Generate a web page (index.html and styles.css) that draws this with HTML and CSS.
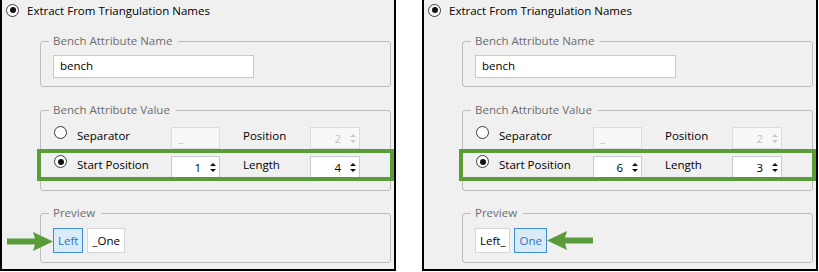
FILE: index.html
```html
<!DOCTYPE html>
<html lang="en">
<head>
    <meta charset="UTF-8">
    <title>Bench Attribute Extraction</title>
    <link rel="stylesheet" href="styles.css">
</head>
<body>

    <div class="shots">

        <!-- Before: start position 1, length 4 -->
        <div class="panel">
            <div class="top-opt"><span class="radio on"></span>Extract From Triangulation Names</div>

            <fieldset class="group name-group">
                <legend>Bench Attribute Name</legend>
                <div class="textbox wide">bench</div>
            </fieldset>

            <fieldset class="group value-group">
                <legend>Bench Attribute Value</legend>
                <div class="row">
                    <span class="radio"></span>
                    <span class="lbl">Separator</span>
                    <div class="textbox small disabled">_</div>
                    <span class="lbl2">Position</span>
                    <div class="spin disabled"><span class="val">2</span><span class="arrows"><i class="up"></i><i class="down"></i></span></div>
                </div>
                <div class="row marked">
                    <span class="radio on"></span>
                    <span class="lbl">Start Position</span>
                    <div class="spin small"><span class="val">1</span><span class="arrows"><i class="up"></i><i class="down"></i></span></div>
                    <span class="lbl2">Length</span>
                    <div class="spin"><span class="val">4</span><span class="arrows"><i class="up"></i><i class="down"></i></span></div>
                    <div class="mark"></div>
                </div>
            </fieldset>

            <fieldset class="group preview-group">
                <legend>Preview</legend>
                <div class="chips">
                    <svg class="arrow arrow-in" width="46" height="21" viewBox="0 0 46 21">
                        <polygon points="0,7.5 28,7.5 26,1 46,10.5 26,20 28,13.5 0,13.5" fill="#5a9c3a"/>
                    </svg>
                    <span class="chip active">Left</span>
                    <span class="chip">_One</span>
                </div>
            </fieldset>
        </div>

        <!-- After: start position 6, length 3 -->
        <div class="panel">
            <div class="top-opt"><span class="radio on"></span>Extract From Triangulation Names</div>

            <fieldset class="group name-group">
                <legend>Bench Attribute Name</legend>
                <div class="textbox wide">bench</div>
            </fieldset>

            <fieldset class="group value-group">
                <legend>Bench Attribute Value</legend>
                <div class="row">
                    <span class="radio"></span>
                    <span class="lbl">Separator</span>
                    <div class="textbox small disabled">_</div>
                    <span class="lbl2">Position</span>
                    <div class="spin disabled"><span class="val">2</span><span class="arrows"><i class="up"></i><i class="down"></i></span></div>
                </div>
                <div class="row marked">
                    <span class="radio on"></span>
                    <span class="lbl">Start Position</span>
                    <div class="spin small"><span class="val">6</span><span class="arrows"><i class="up"></i><i class="down"></i></span></div>
                    <span class="lbl2">Length</span>
                    <div class="spin"><span class="val">3</span><span class="arrows"><i class="up"></i><i class="down"></i></span></div>
                    <div class="mark"></div>
                </div>
            </fieldset>

            <fieldset class="group preview-group">
                <legend>Preview</legend>
                <div class="chips">
                    <span class="chip">Left_</span>
                    <span class="chip active">One</span>
                    <svg class="arrow arrow-out" width="46" height="21" viewBox="0 0 46 21">
                        <polygon points="46,7.5 18,7.5 20,1 0,10.5 20,20 18,13.5 46,13.5" fill="#5a9c3a"/>
                    </svg>
                </div>
            </fieldset>
        </div>

    </div>

</body>
</html>
```

FILE: styles.css
```css
/* General Styling */
* {
    box-sizing: border-box;
}

body {
    margin: 0;
    background-color: #ffffff;
    font-family: "Open Sans", "Noto Sans", sans-serif;
    font-size: 11.5px;
    color: #000000;
}

.shots {
    display: flex;
    gap: 26px;
}

.panel {
    width: 396px;
    height: 271px;
    background-color: #f0f0f0;
    border: 2px solid #000000;
    border-top: none;
}

/* Radio buttons */
.radio {
    flex: none;
    width: 13px;
    height: 13px;
    border: 1px solid #3a3a3a;
    border-radius: 50%;
    background-color: #ffffff;
    display: flex;
    align-items: center;
    justify-content: center;
}

.radio.on::after {
    content: "";
    width: 6px;
    height: 6px;
    border-radius: 50%;
    background-color: #111111;
}

.top-opt {
    height: 20px;
    display: flex;
    align-items: center;
    gap: 8px;
    padding-left: 4px;
}

/* Group boxes */
.group {
    margin: 13px 0 0 38px;
    width: 351px;
    min-width: 0;
    border: 1px solid #bcbcbc;
    border-radius: 3px;
    padding: 6px 12px 8px;
}

.group legend {
    padding: 0 6px 0 4px;
    margin-left: -4px;
    line-height: 16px;
    color: #6d6d6d;
}

.value-group {
    margin-top: 15px;
    padding-top: 9px;
    padding-bottom: 12px;
}

.preview-group {
    margin-top: 14px;
    padding-top: 7px;
    padding-bottom: 9px;
}

/* Inputs */
.textbox {
    height: 23px;
    border: 1px solid #c6cad2;
    background-color: #ffffff;
    padding-left: 6px;
    line-height: 20px;
}

.textbox.wide {
    width: 201px;
}

.textbox.small {
    width: 49px;
    height: 22px;
}

.textbox.disabled {
    color: #c4c4c4;
    background-color: #f8f8f8;
    border-color: #dcdcdc;
}

.row {
    position: relative;
    display: flex;
    align-items: flex-start;
    height: 22px;
}

.row + .row {
    margin-top: 7px;
}

.row .radio {
    margin: -1px 0 0 1px;
}

.lbl {
    width: 94px;
    margin-left: 10px;
    line-height: 16px;
    margin-top: 1px;
}

.lbl2 {
    width: 67px;
    margin-left: 23px;
    line-height: 16px;
    margin-top: 1px;
}

.spin {
    width: 50px;
    height: 22px;
    display: flex;
    align-items: center;
    border: 1px solid #c6cad2;
    background-color: #ffffff;
}

.spin.small {
    width: 49px;
}

.spin .val {
    flex: 1;
    text-align: right;
    padding-right: 6px;
}

.spin .arrows {
    width: 11px;
    margin-right: 1px;
    display: flex;
    flex-direction: column;
    align-items: center;
    gap: 3px;
}

.spin .up,
.spin .down {
    width: 0;
    height: 0;
    border-left: 3.5px solid transparent;
    border-right: 3.5px solid transparent;
}

.spin .up {
    border-bottom: 3px solid #111111;
}

.spin .down {
    border-top: 3px solid #111111;
}

.spin.disabled {
    background-color: #f8f8f8;
    border-color: #dcdcdc;
    color: #c4c4c4;
}

.spin.disabled .up {
    border-bottom-color: #c8c8c8;
}

.spin.disabled .down {
    border-top-color: #c8c8c8;
}

/* Green callout frame */
.mark {
    position: absolute;
    left: -16px;
    top: -7px;
    width: 357px;
    height: 32px;
    border: 4px solid #5a9c3a;
}

/* Preview chips */
.chips {
    position: relative;
    display: flex;
    align-items: center;
    gap: 4px;
    height: 25px;
}

.chip {
    height: 25px;
    line-height: 23px;
    padding: 0 4px;
    border: 1px solid #d6d6d6;
    background-color: #ffffff;
}

.chip.active {
    background-color: #dbeaf7;
    border-color: #3c8ed8;
    color: #2b74c2;
}

.arrow {
    display: block;
}

.arrow-in {
    position: absolute;
    left: -46px;
    top: 3px;
}

.arrow-out {
    margin-left: -4px;
}
```
